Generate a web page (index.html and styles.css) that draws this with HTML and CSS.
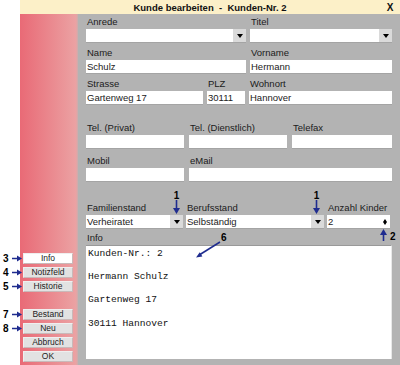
FILE: index.html
```html
<!DOCTYPE html>
<html lang="de">
<head>
    <meta charset="UTF-8">
    <title>Kunde bearbeiten</title>
    <link rel="stylesheet" href="styles.css">
</head>
<body>
    <div class="window">
        <div class="titlebar">
            <span class="title">Kunde bearbeiten &nbsp;- &nbsp;Kunden-Nr. 2</span>
            <span class="close">X</span>
        </div>
        <div class="content">
            <div class="side">
                <div class="group">
                    <div class="navrow">
                        <span class="mark"><b>3</b><svg width="10" height="7" viewBox="0 0 10 7"><path d="M0 3.5H6" stroke="#1f2c8f" stroke-width="1.5"/><path d="M5 0.5L10 3.5L5 6.5Z" fill="#1f2c8f"/></svg></span>
                        <button class="navbtn active">Info</button>
                    </div>
                    <div class="navrow">
                        <span class="mark"><b>4</b><svg width="10" height="7" viewBox="0 0 10 7"><path d="M0 3.5H6" stroke="#1f2c8f" stroke-width="1.5"/><path d="M5 0.5L10 3.5L5 6.5Z" fill="#1f2c8f"/></svg></span>
                        <button class="navbtn">Notizfeld</button>
                    </div>
                    <div class="navrow">
                        <span class="mark"><b>5</b><svg width="10" height="7" viewBox="0 0 10 7"><path d="M0 3.5H6" stroke="#1f2c8f" stroke-width="1.5"/><path d="M5 0.5L10 3.5L5 6.5Z" fill="#1f2c8f"/></svg></span>
                        <button class="navbtn">Historie</button>
                    </div>
                </div>
                <div class="group">
                    <div class="navrow">
                        <span class="mark"><b>7</b><svg width="10" height="7" viewBox="0 0 10 7"><path d="M0 3.5H6" stroke="#1f2c8f" stroke-width="1.5"/><path d="M5 0.5L10 3.5L5 6.5Z" fill="#1f2c8f"/></svg></span>
                        <button class="navbtn">Bestand</button>
                    </div>
                    <div class="navrow">
                        <span class="mark"><b>8</b><svg width="10" height="7" viewBox="0 0 10 7"><path d="M0 3.5H6" stroke="#1f2c8f" stroke-width="1.5"/><path d="M5 0.5L10 3.5L5 6.5Z" fill="#1f2c8f"/></svg></span>
                        <button class="navbtn">Neu</button>
                    </div>
                    <div class="navrow">
                        <span class="mark"></span>
                        <button class="navbtn">Abbruch</button>
                    </div>
                    <div class="navrow">
                        <span class="mark"></span>
                        <button class="navbtn">OK</button>
                    </div>
                </div>
            </div>

            <div class="form">
                <div class="row cols-2">
                    <div class="field">
                        <label>Anrede</label>
                        <div class="select"><span class="value"></span><span class="drop"></span></div>
                    </div>
                    <div class="field">
                        <label>Titel</label>
                        <div class="select"><span class="value"></span><span class="drop"></span></div>
                    </div>
                </div>
                <div class="row cols-2 r2">
                    <div class="field">
                        <label>Name</label>
                        <div class="input">Schulz</div>
                    </div>
                    <div class="field">
                        <label>Vorname</label>
                        <div class="input">Hermann</div>
                    </div>
                </div>
                <div class="row cols-3 r3">
                    <div class="field">
                        <label>Strasse</label>
                        <div class="input">Gartenweg 17</div>
                    </div>
                    <div class="field">
                        <label>PLZ</label>
                        <div class="input">30111</div>
                    </div>
                    <div class="field">
                        <label>Wohnort</label>
                        <div class="input">Hannover</div>
                    </div>
                </div>
                <div class="row cols-tel r4">
                    <div class="field">
                        <label>Tel. (Privat)</label>
                        <div class="input"></div>
                    </div>
                    <div class="field">
                        <label>Tel. (Dienstlich)</label>
                        <div class="input"></div>
                    </div>
                    <div class="field">
                        <label>Telefax</label>
                        <div class="input"></div>
                    </div>
                </div>
                <div class="row cols-mail r5">
                    <div class="field">
                        <label>Mobil</label>
                        <div class="input"></div>
                    </div>
                    <div class="field">
                        <label>eMail</label>
                        <div class="input"></div>
                    </div>
                </div>
                <div class="row cols-status r6">
                    <div class="field">
                        <label>Familienstand</label>
                        <div class="select"><span class="value">Verheiratet</span><span class="drop"></span></div>
                    </div>
                    <div class="field">
                        <label>Berufsstand</label>
                        <div class="select"><span class="value">Selbständig</span><span class="drop"></span></div>
                    </div>
                    <div class="field kinder">
                        <label>Anzahl Kinder</label>
                        <div class="select"><span class="value">2</span><span class="spin"><i class="up"></i><i class="down"></i></span></div>
                    </div>
                </div>
                <div class="field r7">
                    <label>Info</label>
                    <div class="memo">Kunden-Nr.: 2

Hermann Schulz

Gartenweg 17

30111 Hannover</div>
                </div>

                <div class="note note-1a"><b>1</b><svg width="7" height="14" viewBox="0 0 7 14"><path d="M3.5 0V9" stroke="#1f2c8f" stroke-width="1.6"/><path d="M0 8L3.5 14L7 8Z" fill="#1f2c8f"/></svg></div>
                <div class="note note-1b"><b>1</b><svg width="7" height="14" viewBox="0 0 7 14"><path d="M3.5 0V9" stroke="#1f2c8f" stroke-width="1.6"/><path d="M0 8L3.5 14L7 8Z" fill="#1f2c8f"/></svg></div>
                <div class="note-2"><svg width="7" height="12" viewBox="0 0 7 12"><path d="M3.5 12V5" stroke="#1f2c8f" stroke-width="1.6"/><path d="M0 6L3.5 0L7 6Z" fill="#1f2c8f"/></svg><b>2</b></div>
                <div class="note-6"><svg width="26" height="18" viewBox="0 0 26 18"><path d="M25 1L5 13.5" stroke="#1f2c8f" stroke-width="1.5"/><path d="M1 16.5L7.4 15.4L4.8 11.2Z" fill="#1f2c8f"/></svg><b>6</b></div>
            </div>
        </div>
    </div>
</body>
</html>
```

FILE: styles.css
```css
* {
    box-sizing: border-box;
}
body {
    margin: 0;
    font-family: "Liberation Sans", Arial, sans-serif;
    font-size: 9.5px;
    color: #1b1b1b;
    background: #fff;
}
.window {
    width: 400px;
    height: 365px;
    display: flex;
    flex-direction: column;
}
.titlebar {
    margin-left: 20px;
    height: 14px;
    background: #fcf0c8;
    display: grid;
    grid-template-columns: 20px 1fr 20px;
    align-items: center;
    font-weight: bold;
    color: #111;
}
.title {
    grid-column: 2;
    text-align: center;
}
.close {
    text-align: center;
    font-size: 10px;
}
.content {
    flex: 1;
    display: flex;
}

/* linke Leiste */
.side {
    width: 78px;
    display: flex;
    flex-direction: column;
    justify-content: flex-end;
    gap: 17px;
    padding-bottom: 3px;
    background: linear-gradient(to right, #fff 20px, #e96a76 20px, #eba2a3 76px, #c8aeae 78px);
}
.group {
    display: flex;
    flex-direction: column;
    gap: 3px;
}
.navrow {
    display: flex;
    align-items: center;
    height: 11px;
}
.mark {
    width: 23px;
    display: flex;
    align-items: center;
    padding-left: 3px;
    gap: 3px;
}
.mark b {
    font-size: 10px;
    width: 6px;
    color: #000;
}
.navbtn {
    width: 50px;
    height: 11px;
    padding: 0;
    font-family: "Liberation Sans", Arial, sans-serif;
    font-size: 8.5px;
    line-height: 9px;
    color: #222;
    background: #e2e2e2;
    border: 1px solid #efefef;
    border-right-color: #c9b9b9;
    border-bottom-color: #c9b9b9;
}
.navbtn.active {
    background: #fff;
}

/* Formular */
.form {
    flex: 1;
    position: relative;
    background: #b3b3b3;
    padding: 1px 8px 6px 8px;
    display: flex;
    flex-direction: column;
}
.row {
    display: grid;
}
.cols-2 {
    grid-template-columns: 160px 1fr;
    column-gap: 4px;
}
.cols-3 {
    grid-template-columns: 117px 38px 1fr;
    column-gap: 4px;
}
.cols-tel {
    grid-template-columns: 98px 98px 1fr;
    column-gap: 5px;
}
.cols-mail {
    grid-template-columns: 98px 1fr;
    column-gap: 5px;
}
.cols-status {
    grid-template-columns: 97px 138px 1fr;
    column-gap: 3px;
}
.r2, .r3 {
    margin-top: 3px;
}
.r4 {
    margin-top: 16px;
}
.r5 {
    margin-top: 5px;
}
.r6 {
    margin-top: 19px;
}
.r7 {
    margin-top: 2px;
    flex: 1;
    display: flex;
    flex-direction: column;
}
.field label {
    display: block;
    height: 14px;
    line-height: 14px;
    padding-left: 1px;
    white-space: nowrap;
}
.input,
.select {
    height: 14px;
    line-height: 13px;
    background: #fff;
    padding-left: 1px;
    border-bottom: 1px solid #a4a4a4;
    white-space: nowrap;
    color: #222;
}
.select {
    display: flex;
    padding-left: 0;
}
.select .value {
    flex: 1;
    padding-left: 1px;
}
.drop {
    width: 13px;
    background: #dadada;
    display: flex;
    align-items: center;
    justify-content: center;
}
.drop::after {
    content: "";
    border-left: 3.5px solid transparent;
    border-right: 3.5px solid transparent;
    border-top: 4px solid #000;
}
.kinder {
    margin-right: 2px;
}
.spin {
    width: 10px;
    display: flex;
    flex-direction: column;
    align-items: center;
    justify-content: center;
}
.spin i {
    display: block;
    border-left: 2.5px solid transparent;
    border-right: 2.5px solid transparent;
}
.spin .up {
    border-bottom: 3px solid #000;
}
.spin .down {
    border-top: 3px solid #000;
}
.memo {
    flex: 1;
    background: #fff;
    border-top: 1px solid #999;
    border-right: 1px solid #e8e8e8;
    padding: 2px 2px;
    font-family: "Liberation Mono", "Courier New", monospace;
    font-size: 9.6px;
    line-height: 11.6px;
    white-space: pre;
    color: #111;
}

/* Markierungen */
.note {
    position: absolute;
    top: 177px;
    width: 9px;
    display: flex;
    flex-direction: column;
    align-items: center;
}
.note b,
.note-2 b,
.note-6 b {
    font-size: 10px;
    line-height: 9px;
    color: #000;
}
.note-1a {
    left: 94px;
}
.note-1b {
    left: 234px;
}
.note-2 {
    position: absolute;
    left: 302px;
    top: 215px;
    display: flex;
    align-items: flex-end;
    gap: 3px;
}
.note-6 {
    position: absolute;
    left: 117px;
    top: 219px;
    display: flex;
    align-items: flex-start;
}
.note-6 svg {
    margin-top: 8px;
}
```
